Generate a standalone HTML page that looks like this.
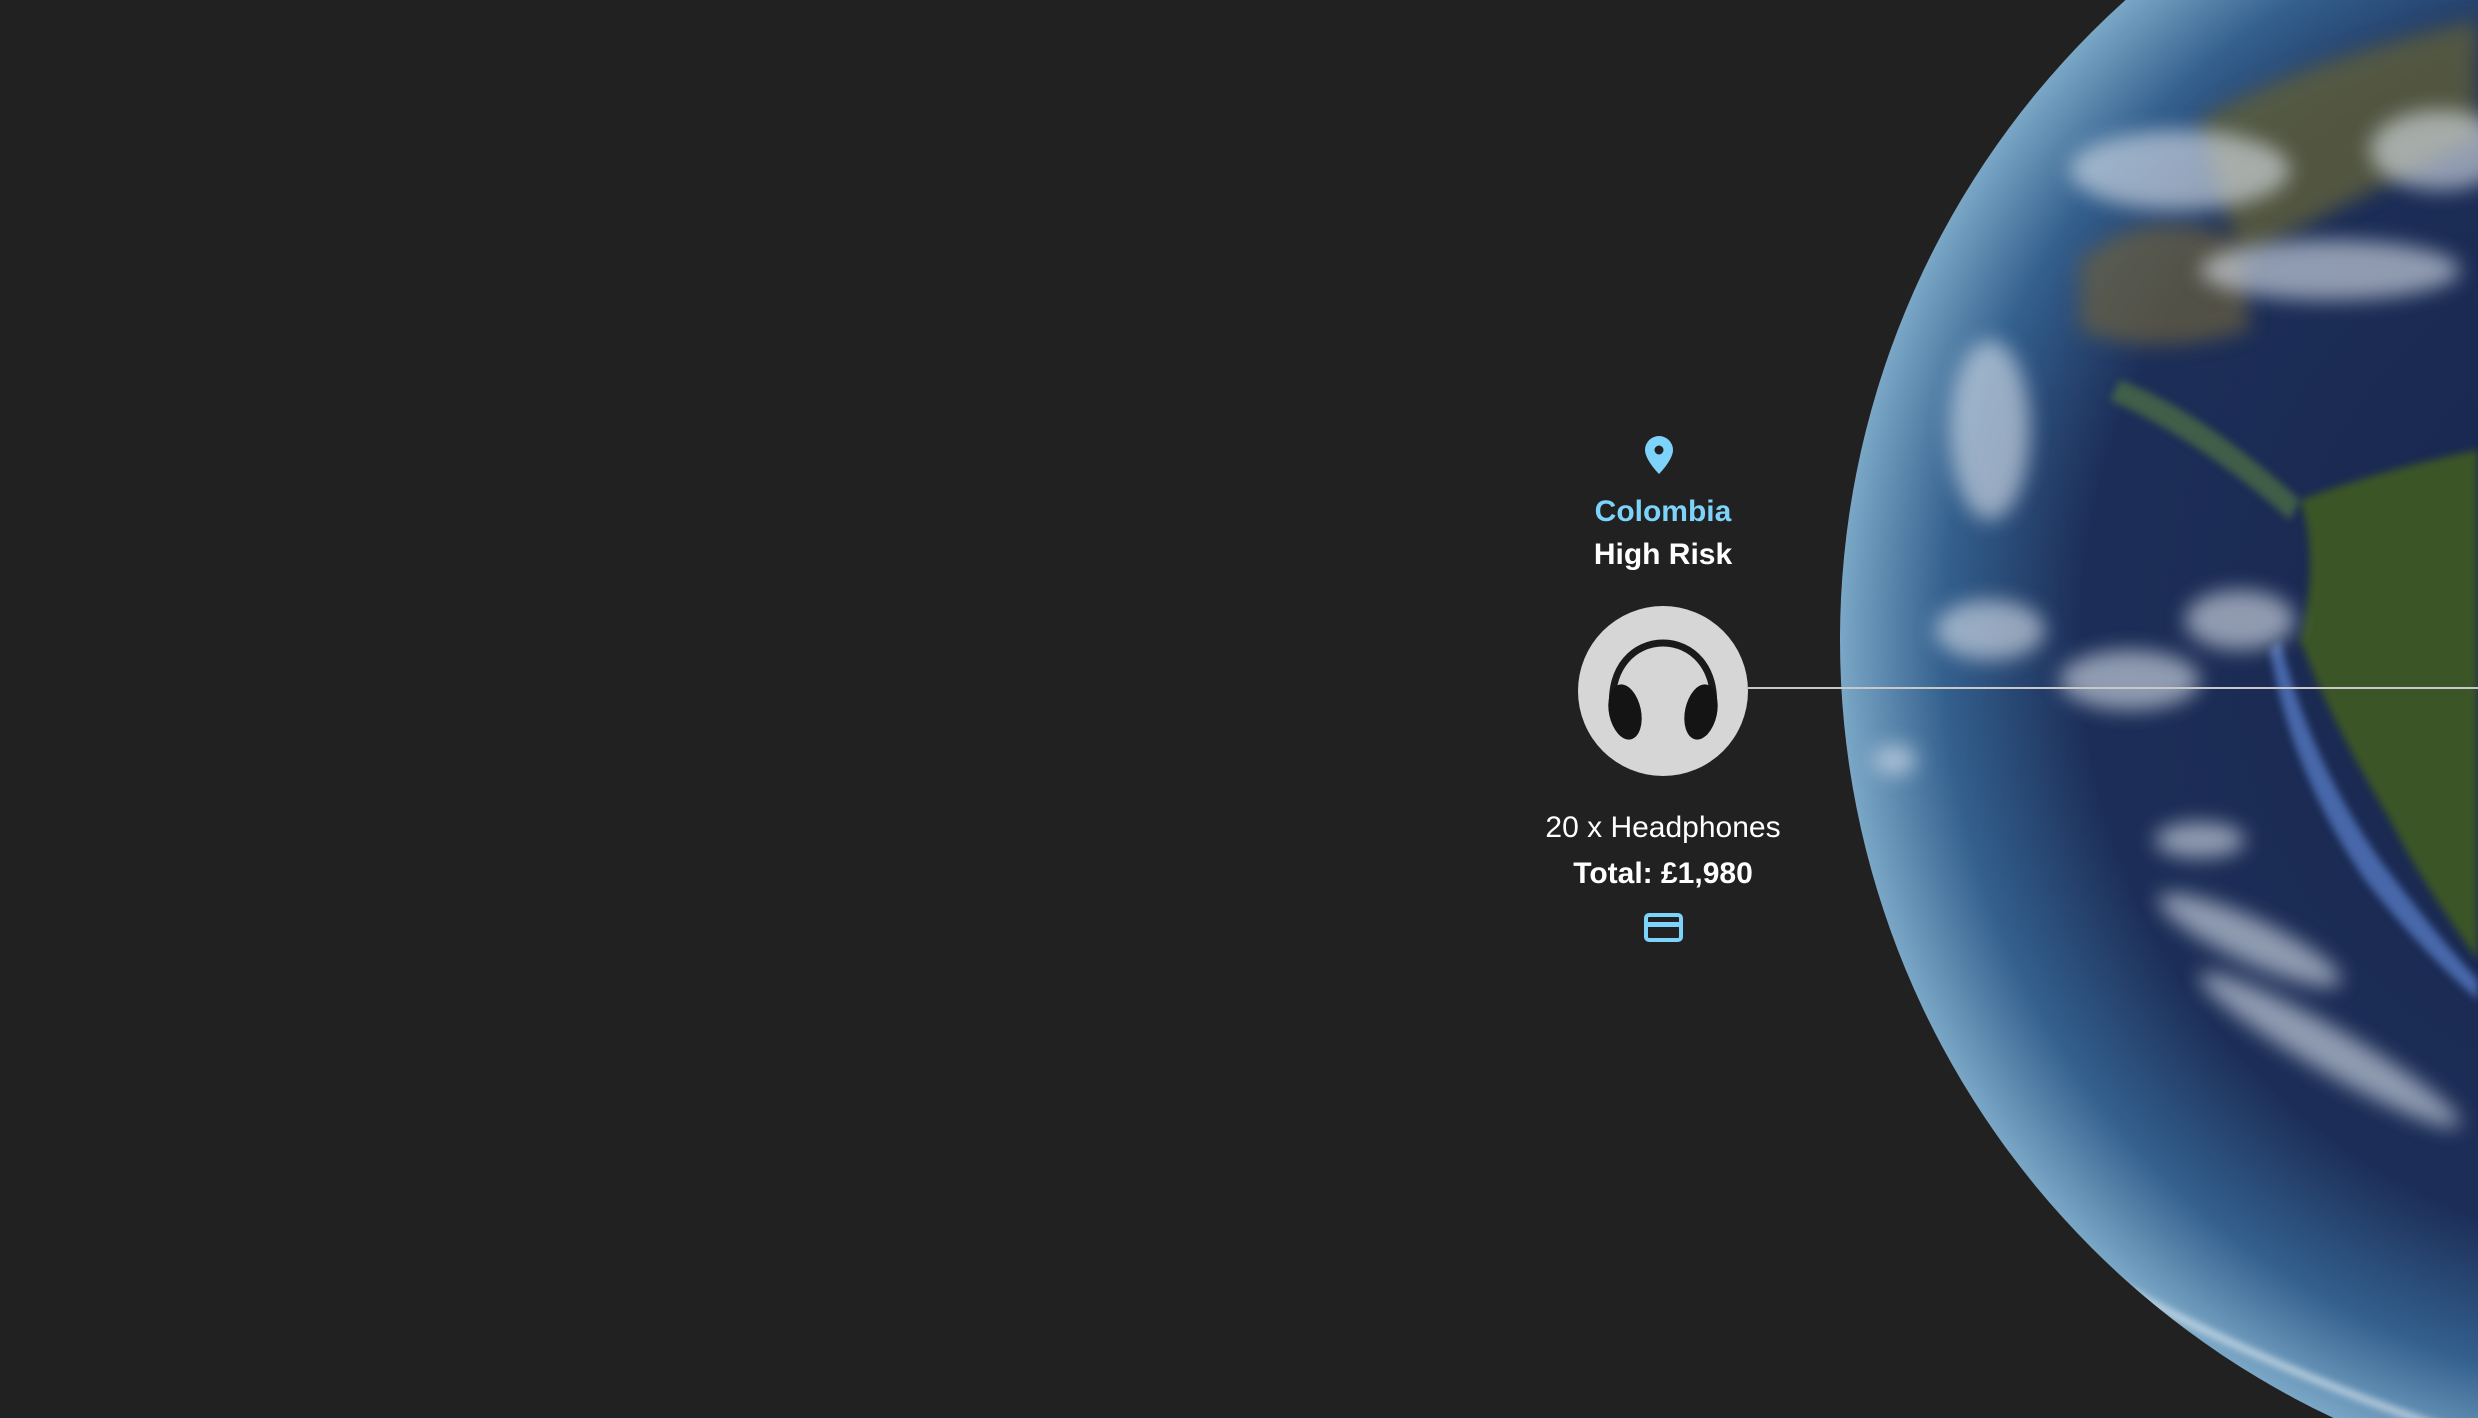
<!DOCTYPE html>
<html><head><meta charset="utf-8"><style>
html,body{margin:0;padding:0;background:#212121;width:2478px;height:1418px;overflow:hidden;font-family:"Liberation Sans",Arial,sans-serif}
.t{position:absolute;left:1463px;width:400px;text-align:center;font-size:30px;line-height:36px}
</style></head><body>
<svg width="2478" height="1418" style="position:absolute;left:0;top:0">
<defs>
<radialGradient id="g" cx="2700" cy="640" r="860" gradientUnits="userSpaceOnUse">
<stop offset="0" stop-color="#18244a"/>
<stop offset="0.72" stop-color="#1c2e58"/>
<stop offset="0.88" stop-color="#34608e"/>
<stop offset="1" stop-color="#7aa7c6"/>
</radialGradient>
<clipPath id="c"><circle cx="2700" cy="640" r="860"/></clipPath>
<filter id="b" x="-50%" y="-50%" width="200%" height="200%"><feGaussianBlur stdDeviation="10"/></filter>
<filter id="b2" x="-50%" y="-50%" width="200%" height="200%"><feGaussianBlur stdDeviation="4"/></filter>
</defs>
<circle cx="2700" cy="640" r="860" fill="url(#g)"/>
<g clip-path="url(#c)">
<path d="M2200 120 Q2300 60 2478 20 L2478 140 Q2350 200 2240 260 Z" fill="#5b5d3e" filter="url(#b)" opacity="0.85"/>
<path d="M2080 260 Q2150 200 2240 240 L2250 330 Q2150 360 2080 330 Z" fill="#6a6040" filter="url(#b)" opacity="0.7"/>
<path d="M2300 500 Q2380 470 2478 450 L2478 960 Q2420 880 2390 820 Q2330 720 2300 640 Q2320 560 2300 500 Z" fill="#3a5527" filter="url(#b2)"/>
<path d="M2280 640 Q2310 760 2380 860 Q2440 940 2478 980 L2478 1000 Q2420 950 2365 880 Q2290 770 2270 650 Z" fill="#5277c0" filter="url(#b2)" opacity="0.8"/>
<path d="M2120 380 Q2200 410 2300 500 L2290 520 Q2200 440 2110 400 Z" fill="#4a6a44" filter="url(#b2)" opacity="0.8"/>
<g fill="#dfe6ee" filter="url(#b)" opacity="0.6">
<ellipse cx="2180" cy="170" rx="110" ry="40"/>
<ellipse cx="2330" cy="270" rx="130" ry="30"/>
<ellipse cx="2440" cy="150" rx="70" ry="40"/>
<ellipse cx="1990" cy="430" rx="40" ry="90"/>
<ellipse cx="1990" cy="630" rx="55" ry="30"/>
<ellipse cx="2130" cy="680" rx="70" ry="30"/>
<ellipse cx="2240" cy="620" rx="55" ry="30"/>
<ellipse cx="2200" cy="840" rx="45" ry="18"/>
<ellipse cx="2250" cy="940" rx="100" ry="22" transform="rotate(25 2250 940)"/>
<ellipse cx="2330" cy="1050" rx="150" ry="22" transform="rotate(30 2330 1050)"/>
<ellipse cx="1895" cy="760" rx="22" ry="15"/>
</g>
<path d="M1960 1180 Q2150 1330 2478 1440" stroke="#e6eef4" stroke-width="6" fill="none" filter="url(#b2)" opacity="0.8"/>
</g>
<line x1="1748" y1="688" x2="2478" y2="688" stroke="#c8c8c8" stroke-width="2"/>
<circle cx="1663" cy="691" r="85" fill="#d6d6d6"/>
<path d="M1613 712 C1603 620 1723 620 1713 712" fill="none" stroke="#1a1a1a" stroke-width="7"/>
<ellipse cx="1625" cy="712" rx="16" ry="28" fill="#141414" transform="rotate(-12 1625 712)"/>
<ellipse cx="1701" cy="712" rx="16" ry="28" fill="#141414" transform="rotate(12 1701 712)"/>
<path d="M1659 436 a14 14 0 0 1 14 14 c0 10-14 24-14 24 s-14-14-14-24 a14 14 0 0 1 14-14z" fill="#7dd3fa"/>
<circle cx="1659" cy="450" r="4.5" fill="#212121"/>
<rect x="1646" y="915" width="35" height="25" rx="3" fill="none" stroke="#7dd3fa" stroke-width="4"/>
<rect x="1646" y="922" width="35" height="5" fill="#7dd3fa"/>
</svg>
<div class="t" style="top:494px;color:#7dd3fa;font-weight:bold">Colombia</div>
<div class="t" style="top:537px;color:#fff;font-weight:bold">High Risk</div>
<div class="t" style="top:810px;color:#fff">20 x Headphones</div>
<div class="t" style="top:856px;color:#fff;font-weight:bold">Total: £1,980</div>
</body></html>
